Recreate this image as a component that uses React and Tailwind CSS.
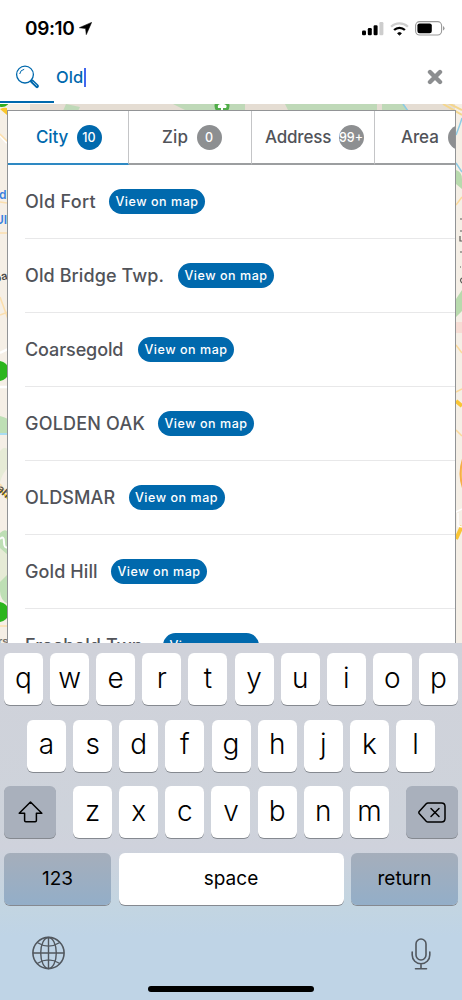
import clsx from 'clsx'

const tabs = [
    { name: 'City', count: '10', cell: 'w-[121px] pl-[28px]', label: 'w-[32px] tracking-[-0.1px]', active: true },
    { name: 'Zip', count: '0', cell: 'w-[123px] pl-[33px]', label: 'w-[26px] tracking-[0.2px]' },
    { name: 'Address', count: '99+', cell: 'w-[123px] pl-[13px]', label: 'w-[65px] tracking-[-0.2px]' },
    { name: 'Area', count: '', cell: 'w-[123px] pl-[26px]', label: 'w-[38px] tracking-[-0.1px]' },
]

const cities = [
    { name: 'Old Fort', size: 'w-[71px] tracking-[0.3px]' },
    { name: 'Old Bridge Twp.', size: 'w-[140px] tracking-[0.1px]' },
    { name: 'Coarsegold', size: 'w-[100px] tracking-[-0.1px]' },
    { name: 'GOLDEN OAK', size: 'w-[120px] tracking-[0.2px]' },
    { name: 'OLDSMAR', size: 'w-[90.5px] tracking-[0.1px]' },
    { name: 'Gold Hill', size: 'w-[73px] tracking-[0.1px]' },
    { name: 'Freehold Twp.', size: 'w-[125px] tracking-[0.1px]' },
]

function StatusBar() {
    return (
        <div className="flex h-[56px] items-center justify-between pl-[25px] pr-[17px] pt-[1px]">
            <div className="flex items-center gap-[4px]">
                <span className="w-[50px] whitespace-nowrap text-[19px] font-semibold leading-6 tracking-[-0.4px] text-black">09:10</span>
                <svg className="h-[13px] w-[13px]" viewBox="0 0 13 13">
                    <path d="M12.6.4 7.3 12.6 6.6 6.5.4 5.7Z" fill="#000" stroke="#000" strokeWidth=".6" strokeLinejoin="round" />
                </svg>
            </div>
            <div className="flex items-center gap-[6px]">
                <svg className="h-[14px] w-[22px]" viewBox="0 0 22 14">
                    <rect x="0" y="8.5" width="4" height="4.8" rx="1.2" />
                    <rect x="5.8" y="6" width="4" height="7.3" rx="1.2" />
                    <rect x="11.6" y="3.2" width="4" height="10.1" rx="1.2" />
                    <rect x="17.4" y="0" width="4" height="13.3" rx="1.2" fill="#cdcdcd" />
                </svg>
                <svg className="h-[14px] w-[19px]" viewBox="0 0 19 14" fill="none" strokeWidth="2.3">
                    <path d="M1.1 4.8a12 12 0 0 1 16.8 0" stroke="#cdcdcd" />
                    <path d="M4.1 8a7.7 7.7 0 0 1 10.8 0" stroke="#000" />
                    <path d="M7.6 11.400a2.700 2.700 0 0 1 3.800 0l-1.900 1.600Z" fill="#000" stroke="#000" strokeWidth="1" />
                </svg>
                <svg className="h-[15px] w-[30px]" viewBox="0 0 30 15">
                    <rect x=".6" y=".6" width="26" height="13.4" rx="4" fill="none" stroke="#999" strokeWidth="1.1" />
                    <rect x="2.4" y="2.4" width="14.4" height="9.8" rx="2.2" />
                    <path d="M28 5v4.6q1.5-.7 1.5-2.3T28 5Z" fill="#999" />
                </svg>
            </div>
        </div>
    )
}

function SearchBar() {
    return (
        <div className="flex h-[48px] flex-col">
            <div className="flex h-[45px] items-center pl-[15px] pr-[19px] pb-[3px]">
                <svg className="mt-[-1px] h-[24px] w-[25px]" viewBox="0 0 25 24" fill="none" stroke="#0069ad">
                    <circle cx="10" cy="9.6" r="8.4" strokeWidth="1.3" />
                    <path d="M4.7 9A5.5 5.5 0 0 1 9.2 4.3" strokeWidth="1" />
                    <path d="m16.800 16.200 5.200 5" strokeWidth="3.800" strokeLinecap="round" />
                    <path d="m17.600 16.600 4.400 4.200" stroke="#b9d6e9" strokeWidth=".9" />
                </svg>
                <span className="ml-[16px] w-[28px] whitespace-nowrap text-[16.5px] font-medium tracking-[0.1px] text-[#0069ad]">Old</span>
                <span className="h-[19px] w-[2px] bg-[#4267ee]" />
                <svg className="ml-auto h-[16px] w-[16px]" viewBox="0 0 16 16">
                    <path d="m3 3 10 10M13 3 3 13" stroke="#8c8e90" strokeWidth="4.4" strokeLinecap="round" />
                </svg>
            </div>
            <div className="mb-px mt-auto h-[2px] w-[54px] bg-[#0069ad]" />
        </div>
    )
}

function MapBackground() {
    return (
        <svg className="absolute left-0 top-0 h-[539px] w-[462px]" viewBox="0 104 462 539" fontFamily="Inter, sans-serif" fontWeight="600" fill="none">
            <rect y="104" width="462" height="539" fill="#f5efe6" />
            <path d="M30 104h425v7H30z" fill="#e5ddd3" />
            <path d="m66 104 14 3-2 4H63ZM173 104h72v6h-60ZM285 104h92v6h-89ZM382 104h22l4 7h-26Z" fill="#bfd9b8" />
            <circle cx="222" cy="106" r="7.5" fill="#51ad49" />
            <path d="M221 110v-2h-3q-1-4 3-4h3q4 1 2 4h-3v2Z" fill="#fff" />
            <circle cx="2" cy="99" r="8" fill="#31ad20" />
            <path d="M0 109q4-2 7-1v7Z" fill="#fac62a" />
            <path d="m0 135 7 8M0 353l8-4M0 387h8" stroke="#fff" strokeWidth="2.5" />
            <path d="m0 134 8 8M0 202l7 1M0 233h8M0 297l8 22M0 315l8-3M0 484l8 11M0 626h8" stroke="#fbdfae" strokeWidth="1.600" />
            <path d="m0 489 8 10" stroke="#fac62a" strokeWidth="2" />
            <path d="M0 416q4 1 8 3v15H0ZM0 533q5-5 8-1v72q-8-4-8-13Z" fill="#bedfb5" />
            <path d="M0 451q5-6 8-1v18q-5 4-8 14ZM0 548l8 7v19l-8 8Z" fill="#e6ebd6" />
            <path d="M0 434h8" stroke="#a9dcf2" strokeWidth="2" />
            <path d="M0 539q4-4 4 3t4 5" stroke="#fff" strokeWidth="2" />
            <circle cx="-1" cy="371" r="10" fill="#2bb51d" />
            <circle cx="-1" cy="612" r="10" fill="#2bb51d" />
            <text x="-1" y="199" fontSize="12" fill="#397fe0">d</text>
            <text x="-5" y="224" fontSize="12" fill="#397fe0">UI</text>
            <text x="-5" y="281" fontSize="11" fill="#4c4b49" transform="rotate(-14 0 281)">ba</text>
            <text x="-5" y="493" fontSize="11" fill="#4c4b49" transform="rotate(42 0 493)">ah</text>
            <text x="-2" y="645" fontSize="11" fill="#77716a">rs</text>

            <path d="m443 104 19 11M448 103l14 7" stroke="#f4d68d" strokeWidth="2" />
            <path d="m403 104 5 7M456 135q4-10 6-17M456 163l6 9" stroke="#8ccbe5" strokeWidth="1.5" />
            <path d="M456 170q6 2 6 9v10l-6-5ZM456 299l6-9v21l-6 6Z" fill="#b8daad" />
            <path d="M456 322h6v11h-6Z" fill="#f6dcd4" />
            <path d="m456 205 6-8M456 345l6 8M456 392l6-3M456 430l6 6" stroke="#fbd99b" strokeWidth="1.5" />
            <path d="m456 401 6 5M456 539l6-13" stroke="#f9c535" strokeWidth="4" />
            <path d="M463 459q-5 15 0 29" stroke="#f6ae48" strokeWidth="2" fill="#fad978" />
            <path d="m456 512 6-3M458 513v13l4 1" stroke="#fff" strokeWidth="1.5" />
            <path d="M460 219h2M460 231h2M460 236v5h2M460 252h2M460 267h1M462 278q-3 2 0 5" stroke="#5d5a56" strokeWidth="1.2" />
        </svg>
    )
}

function ResultPanel() {
    return (
        <div className="relative ml-[7px] mt-[6px] h-[533px] w-[449px] overflow-hidden border-x border-t border-[#929496] bg-white">
            <div className="mb-[0.5px] flex h-[53.5px] w-[490px]">
                {tabs.map((tab) => (
                    <div
                        key={tab.name}
                        className={clsx(
                            'flex h-full shrink-0 items-center border-b-[2px] border-r border-r-[#c4c5c7] pt-[2px]',
                            tab.cell,
                            tab.active ? 'border-b-[#2e89c3] text-[#0069ad]' : 'border-b-[#9c9ea0] text-[#515359]'
                        )}
                    >
                        <span className={clsx('whitespace-nowrap text-[17px] font-medium', tab.label)}>{tab.name}</span>
                        <span className={clsx('ml-[8.500px] flex h-[25px] w-[25px] shrink-0 items-center justify-center rounded-full pt-px text-[12.5px] font-medium text-white', tab.active ? 'bg-[#0069ad]' : 'bg-[#8d8f91]')}>
                            {tab.count}
                        </span>
                    </div>
                ))}
            </div>
            <ul>
                {cities.map((city) => (
                    <li key={city.name} className="ml-[17px] flex h-[74px] items-center border-b border-[#e8e8e9]">
                        <span className={clsx('whitespace-nowrap text-[18px] font-medium text-[#515359]', city.size)}>{city.name}</span>
                        <span className="ml-[13px] flex h-[25px] w-[96px] items-center justify-center whitespace-nowrap rounded-full bg-[#0069ad] pt-px text-[12.5px] font-medium tracking-[0.55px] text-white">
                            View on map
                        </span>
                    </li>
                ))}
            </ul>
        </div>
    )
}

const keyBase = 'flex h-[52px] items-center justify-center rounded-[6px] shadow-[0_1px_0_#858990]'

function Letter({ children }) {
    return <div className={clsx(keyBase, 'w-[39px] bg-white pb-[3px] text-[28px] font-[350] text-black')}>{children}</div>
}

function Keyboard() {
    return (
        <div className="h-[357px] bg-[linear-gradient(to_bottom,#d0d2da_0%,#ced3db_50%,#cfd2dc_57%,#c3d5e1_73%,#bfd4e6_82%,#bfd4e6_100%)] px-[4px] pt-[10px]">
            <div className="flex flex-col gap-[14.6px]">
                <div className="flex justify-between">
                    {'qwertyuiop'.split('').map((k) => <Letter key={k}>{k}</Letter>)}
                </div>
                <div className="flex justify-between px-[23px]">
                    {'asdfghjkl'.split('').map((k) => <Letter key={k}>{k}</Letter>)}
                </div>
                <div className="flex justify-between">
                    <div className={clsx(keyBase, 'w-[52px] bg-[#a9b0bc]')}>
                        <svg className="h-[22px] w-[25px]" viewBox="0 0 25 22" fill="none" stroke="#000" strokeWidth="1.5" strokeLinejoin="round">
                            <path d="m12.5 1 11.3 11.3h-5.4v7.2q0 1.2-1.2 1.2H7.8q-1.2 0-1.2-1.2v-7.2H1.2Z" />
                        </svg>
                    </div>
                    <div className="flex w-[316px] justify-between">
                        {'zxcvbnm'.split('').map((k) => <Letter key={k}>{k}</Letter>)}
                    </div>
                    <div className={clsx(keyBase, 'w-[52px] bg-[#a9b0bc]')}>
                        <svg className="h-[21px] w-[28px]" viewBox="0 0 28 21" fill="none" stroke="#000" strokeWidth="1.5" strokeLinejoin="round" strokeLinecap="round">
                            <path d="M10 1h13.5Q27 1 27 4.500V16.500Q27 20 23.500 20H10Q9 20 8.200 19.200L1.200 11.500Q.5 10.500 1.200 9.500L8.200 1.800Q9 1 10 1Z" />
                            <path d="m13 6.500 8 8m0-8-8 8" />
                        </svg>
                    </div>
                </div>
                <div className="flex justify-between text-[19px] text-black">
                    <div className={clsx(keyBase, 'w-[107px] bg-linear-to-b from-[#a5aebb] to-[#93aec8] pt-px')}>123</div>
                    <div className={clsx(keyBase, 'w-[225px] bg-white')}>space</div>
                    <div className={clsx(keyBase, 'w-[107px] bg-linear-to-b from-[#a5aebb] to-[#93aec8]')}>return</div>
                </div>
            </div>
            <div className="flex justify-between pl-[28px] pr-[27px] pt-[31px]">
                <svg className="h-[34px] w-[33px]" viewBox="0 0 33 34" fill="none" stroke="#51575e" strokeWidth="1.4">
                    <circle cx="16.500" cy="17" r="15.600" strokeWidth="1.600" />
                    <ellipse cx="16.500" cy="17" rx="7.800" ry="15.500" />
                    <path d="M16.500 1.500v31M1 17h31M5.200 6.500q11.300 7.200 22.600 0M5.200 27.500q11.300-7.200 22.600 0" />
                </svg>
                <svg className="mt-[2px] h-[32px] w-[20px]" viewBox="0 0 20 32" fill="none" stroke="#51575e" strokeWidth="1.600" strokeLinecap="round">
                    <rect x="5" y="1" width="10" height="21" rx="5" />
                    <path d="M1.200 14v3a8.800 8.800 0 0 0 17.600 0v-3M10 26v4.500M4.500 30.700h11" />
                </svg>
            </div>
            <div className="mx-auto mt-[16px] h-[6px] w-[166px] rounded-full bg-black" />
        </div>
    )
}

export default function App() {
    return (
        <div className="h-[1000px] w-[462px] overflow-hidden bg-white font-['Inter',sans-serif]">
            <StatusBar />
            <SearchBar />
            <div className="relative h-[539px] overflow-hidden">
                <MapBackground />
                <ResultPanel />
            </div>
            <Keyboard />
        </div>
    )
}
